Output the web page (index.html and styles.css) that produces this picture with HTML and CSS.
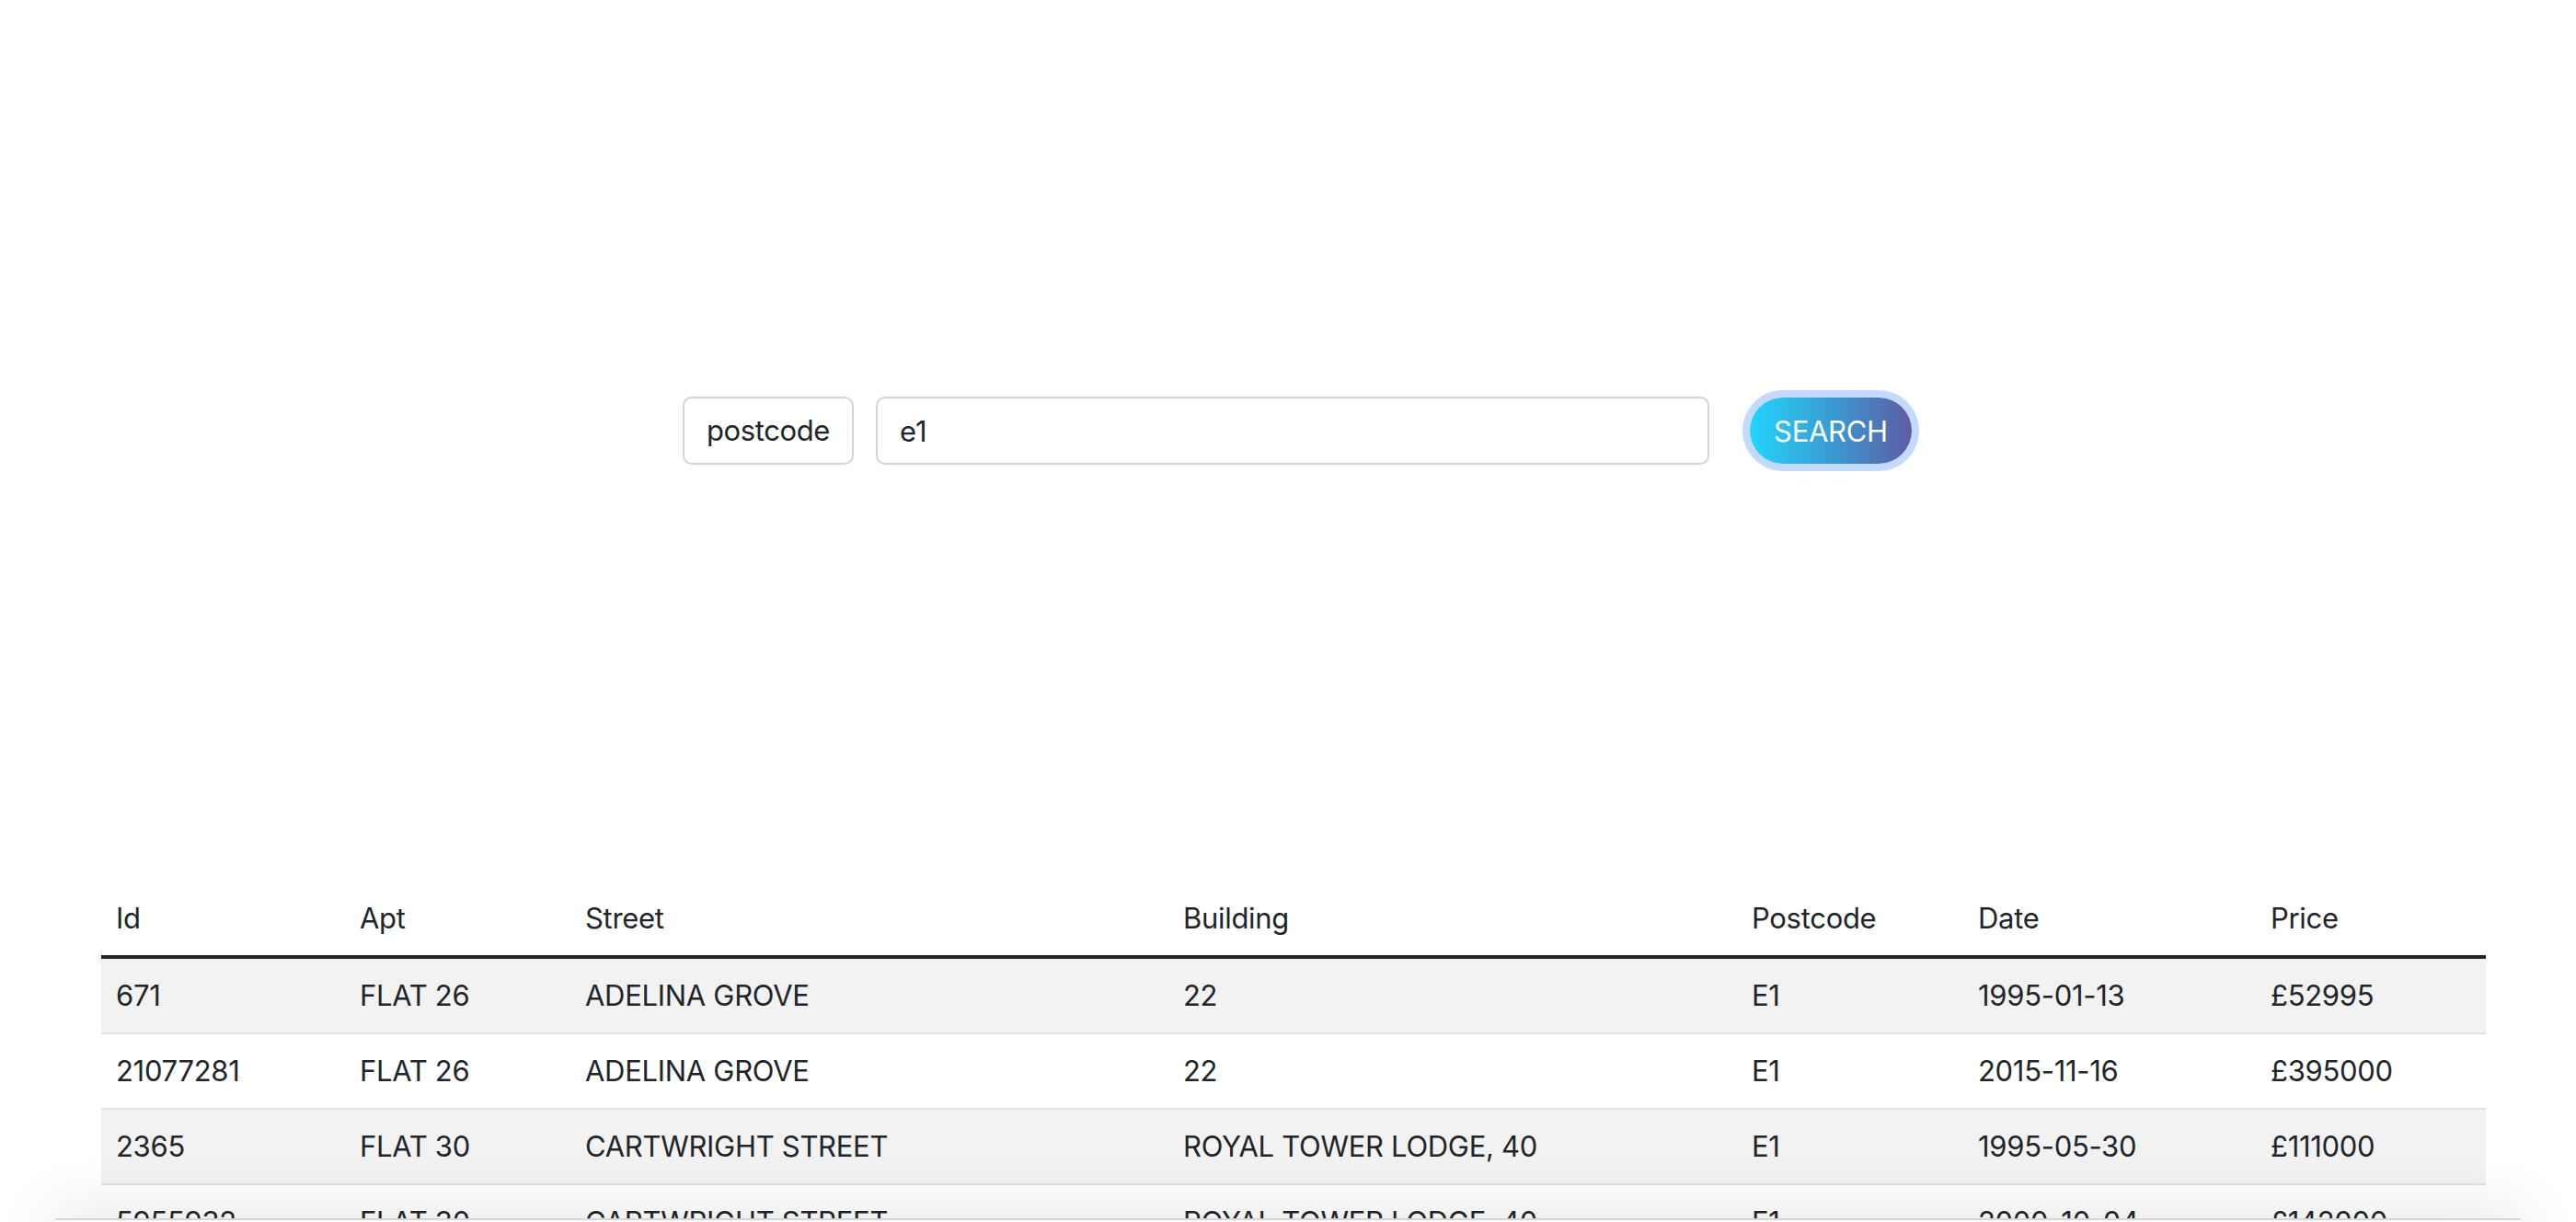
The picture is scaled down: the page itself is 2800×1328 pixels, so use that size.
FILE: index.html
```html
<!DOCTYPE html>
<html lang="en">
<head>
<meta charset="utf-8">
<title>Property search</title>
<link rel="stylesheet" href="styles.css">
</head>
<body>
<main class="page">
  <section class="search">
    <form class="search-form">
      <div class="input-group">
        <span class="input-label">postcode</span>
        <input class="input-field" type="text" value="e1">
      </div>
      <button class="search-btn" type="button">SEARCH</button>
    </form>
  </section>
  <section class="results">
    <table class="data-table">
      <colgroup>
        <col class="c-id"><col class="c-apt"><col class="c-street"><col class="c-building"><col class="c-postcode"><col class="c-date"><col class="c-price">
      </colgroup>
      <thead>
        <tr><th>Id</th><th>Apt</th><th>Street</th><th>Building</th><th>Postcode</th><th>Date</th><th>Price</th></tr>
      </thead>
      <tbody>
        <tr><td>671</td><td>FLAT 26</td><td>ADELINA GROVE</td><td>22</td><td>E1</td><td>1995-01-13</td><td>£52995</td></tr>
        <tr><td>21077281</td><td>FLAT 26</td><td>ADELINA GROVE</td><td>22</td><td>E1</td><td>2015-11-16</td><td>£395000</td></tr>
        <tr><td>2365</td><td>FLAT 30</td><td>CARTWRIGHT STREET</td><td>ROYAL TOWER LODGE, 40</td><td>E1</td><td>1995-05-30</td><td>£111000</td></tr>
        <tr><td>5955932</td><td>FLAT 30</td><td>CARTWRIGHT STREET</td><td>ROYAL TOWER LODGE, 40</td><td>E1</td><td>2000-10-04</td><td>£142000</td></tr>
      </tbody>
    </table>
  </section>
</main>
<div class="bottom-shade"></div>
</body>
</html>
```

FILE: styles.css
```css
html, body {
  margin: 0;
  padding: 0;
  background: #ffffff;
  overflow: hidden;
}

body {
  font-family: Inter, "Liberation Sans", sans-serif;
  font-size: 32px;
  line-height: 48px;
  color: #212529;
}

.page {
  display: flex;
  flex-direction: column;
}

.search {
  height: 936px;
  display: flex;
  align-items: center;
  justify-content: center;
  padding-left: 20px;
}

.search-form {
  display: flex;
  align-items: center;
  gap: 44px;
}

.input-group {
  display: flex;
  align-items: stretch;
  gap: 24px;
}

.input-label {
  display: flex;
  align-items: center;
  box-sizing: border-box;
  height: 74px;
  padding: 0 24px;
  border: 2px solid #ced4da;
  border-radius: 10px;
  font-size: 31px;
  letter-spacing: -0.4px;
  color: #212529;
  background: #ffffff;
}

.input-field {
  box-sizing: border-box;
  width: 906px;
  height: 74px;
  padding: 0 24px;
  border: 2px solid #ced4da;
  border-radius: 10px;
  font-family: Inter, "Liberation Sans", sans-serif;
  font-size: 31px;
  color: #212529;
  background: #ffffff;
  outline: none;
}

.search-btn {
  box-sizing: border-box;
  width: 176px;
  height: 72px;
  border: none;
  border-radius: 36px;
  padding: 0;
  font-family: Inter, "Liberation Sans", sans-serif;
  font-size: 31px;
  letter-spacing: -0.3px;
  color: #ffffff;
  background: linear-gradient(90deg, #22d5fc 0%, #3a9cd2 50%, #5f5ba3 100%);
  box-shadow: 0 0 0 8px #c3dafd;
}

.results {
  padding: 22px 98px 0 110px;
}

.data-table {
  width: 100%;
  border-collapse: collapse;
  table-layout: fixed;
}

.c-id { width: 265px; }
.c-apt { width: 245px; }
.c-street { width: 650px; }
.c-building { width: 618px; }
.c-postcode { width: 246px; }
.c-date { width: 318px; }
.c-price { width: 250px; }

.data-table th,
.data-table td {
  text-align: left;
  font-weight: 400;
  padding: 16px 16px;
  line-height: 48px;
  letter-spacing: -0.3px;
  font-size: 31px;
  white-space: nowrap;
}

.data-table thead th {
  border-bottom: 4px solid #212529;
}

.data-table tbody td {
  border-bottom: 2px solid #dee2e6;
}

.data-table tbody tr:nth-child(odd) td {
  background: #f2f2f2;
}

.bottom-shade {
  position: fixed;
  left: 60px;
  right: 60px;
  bottom: -60px;
  height: 62px;
  background: #ffffff;
  border-top: 2px solid #d6d6d6;
  box-shadow: 0 -6px 70px rgba(0, 0, 0, 0.11);
}
```
